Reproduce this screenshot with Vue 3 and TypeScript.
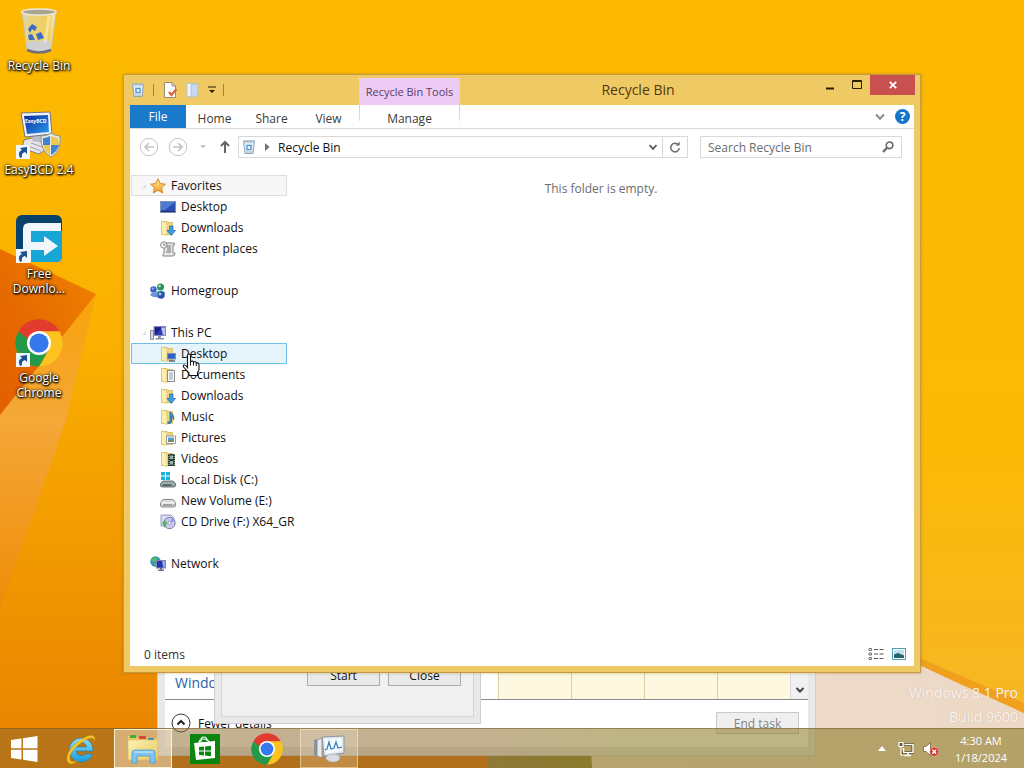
<script setup lang="ts">
import { ref } from 'vue'

interface TreeItem { label: string; icon: string }
interface TreeGroup extends TreeItem { open: boolean; state?: string; children: TreeItem[] }

const shortcuts = [
  { label: 'Recycle Bin', icon: 'bin', link: false },
  { label: 'EasyBCD 2.4', icon: 'easybcd', link: true },
  { label: 'Free Downlo...', icon: 'fdm', link: true },
  { label: 'Google Chrome', icon: 'chrome', link: true },
]

const groups: TreeGroup[] = [
  {
    label: 'Favorites', icon: 'star', open: true, state: 'selected',
    children: [
      { label: 'Desktop', icon: 'screen' },
      { label: 'Downloads', icon: 'f-down' },
      { label: 'Recent places', icon: 'recent' },
    ],
  },
  { label: 'Homegroup', icon: 'home', open: false, children: [] },
  {
    label: 'This PC', icon: 'pc', open: true,
    children: [
      { label: 'Desktop', icon: 'f-desk' },
      { label: 'Documents', icon: 'f-doc' },
      { label: 'Downloads', icon: 'f-down' },
      { label: 'Music', icon: 'f-music' },
      { label: 'Pictures', icon: 'f-pic' },
      { label: 'Videos', icon: 'f-video' },
      { label: 'Local Disk (C:)', icon: 'disk-c' },
      { label: 'New Volume (E:)', icon: 'disk' },
      { label: 'CD Drive (F:) X64_GR', icon: 'cd' },
    ],
  },
  { label: 'Network', icon: 'net', open: false, children: [] },
]

const pinned = [
  { label: 'Internet Explorer', icon: 'ie', state: '' },
  { label: 'File Explorer', icon: 'explorer', state: 'active' },
  { label: 'Store', icon: 'store', state: '' },
  { label: 'Google Chrome', icon: 'chrome', state: '' },
  { label: 'Task Manager', icon: 'taskmgr', state: 'running' },
]

const tabs = ['Home', 'Share', 'View']
const query = ref('')
</script>

<template>
  <svg class="sprite" aria-hidden="true">
    <defs>
      <linearGradient id="g-folder" x1="0" x2="1" y1="0" y2="1"><stop offset="0" stop-color="#fdf3b4" /><stop offset="1" stop-color="#e8c85e" /></linearGradient>
      <linearGradient id="g-glass" x1="0" x2="1"><stop offset="0" stop-color="#d9d6c2" /><stop offset=".25" stop-color="#e9d27c" /><stop offset=".8" stop-color="#f0cf5a" /><stop offset="1" stop-color="#f3efe0" /></linearGradient>
      <linearGradient id="g-scr" x1="0" x2="1" y1="0" y2="1"><stop offset="0" stop-color="#0a2a9c" /><stop offset="1" stop-color="#2e9bee" /></linearGradient>
      <linearGradient id="g-ie" x1="0" x2="0" y1="0" y2="1"><stop offset="0" stop-color="#8ce0fb" /><stop offset="1" stop-color="#1a9be0" /></linearGradient>
      <linearGradient id="g-star" x1="0" x2="0" y1="0" y2="1"><stop offset="0" stop-color="#fff1a0" /><stop offset="1" stop-color="#f59a1c" /></linearGradient>
    </defs>
    <symbol id="bin" viewBox="0 0 48 48">
      <path d="M7 5 L41 5 L36 43 Q24 48 12 43 Z" fill="url(#g-glass)" stroke="#c9c3ac" stroke-width="1" />
      <path d="M12 37 Q17 31 23 35 Q30 30 36 36 L35 43 Q24 48 12 43Z" fill="#cfd0d2" />
      <path d="M12 43 Q24 48 36 43" fill="none" stroke="#6f6f78" stroke-width="2.500" />
      <ellipse cx="24" cy="5" rx="17" ry="3" fill="#a9a48f" stroke="#ece8dc" stroke-width="1.500" />
      <path d="M13 22 L17 17 L22 20 L20 24 L17 22 L15 26Z M21 27 L26 25 L29 31 L23 33Z M13 28 L17 27 L20 33 L14 33Z" fill="#3c6cc8" />
      <path d="M34 9 L30 36" stroke="#fff7d6" stroke-width="3" opacity=".5" />
    </symbol>
    <symbol id="easybcd" viewBox="0 0 48 48">
      <path d="M9 29 L24 25 L38 34 L24 43 L7 37Z" fill="#e6e6ea" stroke="#7d808c" />
      <path d="M16 32 L30 37 M13 35 L26 40" stroke="#9a9ca8" />
      <path d="M18 24 L30 25 L28 32 L17 30Z" fill="#b9bcc6" />
      <path d="M6 2 L35 1 L37 23 L10 26Z" fill="#f2f3f8" stroke="#707484" />
      <path d="M9 5 L33 4 L34 21 L12 23Z" fill="url(#g-scr)" />
      <path d="M36 22 Q40 25 45 25 Q47 40 36 46 Q25 40 26 25 Q32 25 36 22Z" fill="#e9e9e3" stroke="#8f9299" />
      <path d="M35 25 V34 H28 Q28 30 28 27 Q32 27 35 25Z M36 34 H44 Q42 41 36 44Z" fill="#3f83cf" />
      <path d="M36 25 V34 H44 Q44 30 43 27 Q39 27 36 25Z M35 34 H28 Q30 41 35 44Z" fill="#f1c94a" />
    </symbol>
    <symbol id="fdm" viewBox="0 0 48 48">
      <rect x="1" y="0" width="46" height="47" rx="6" fill="#08426a" />
      <path d="M15 16 H47 V41 Q47 47 41 47 H15Z" fill="#18a6d6" />
      <path d="M8 47 V14 Q8 8 14 8 H46 V16 H16 V27 H29 V21 L43 31 L29 41 V35 H16 V47Z" fill="#f1f5fc" />
    </symbol>
    <symbol id="chrome" viewBox="0 0 48 48">
      <path d="M24 24 L3.600 12.200 A23.500 23.500 0 0 1 44.400 12.200Z" fill="#e33b2e" />
      <path d="M24 12.200 H44.400 A23.500 23.500 0 0 1 24 47.500 L34 30Z" fill="#fcc31e" />
      <path d="M3.600 12.200 L14 30 L24 36 L34 30 L24 47.500 A23.500 23.500 0 0 1 3.600 12.200Z" fill="#229a49" />
      <path d="M3.600 12.200 H24 L14 24Z" fill="#e33b2e" />
      <path d="M3.600 12.200 L14 30 L13 20Z" fill="#229a49" />
      <circle cx="24" cy="24" r="12" fill="#fff" /><circle cx="24" cy="24" r="9.600" fill="#3578ec" />
    </symbol>
    <symbol id="arrow" viewBox="0 0 14 14">
      <rect width="14" height="14" fill="#f3f6fa" />
      <path d="M4 13 Q1 7 6 5 L4 3 L11 2 L11 9 L9 7 Q5 8 6 12Z" fill="#1d4f93" />
    </symbol>
    <symbol id="ie" viewBox="0 0 32 32">
      <path d="M16 5 A12 12 0 1 0 27.500 21 H20.500 A5.500 5.500 0 0 1 11 18 H28 A12 12 0 0 0 16 5Z M11 14 A5.300 5.300 0 0 1 21.500 14Z" fill="url(#g-ie)" stroke="#1580bb" stroke-width=".6" fill-rule="evenodd" />
      <path d="M3 29 C-1 23 7 11 19 5 C26 1 31 2 29.500 8 C29 4 25 4 19 8 C9 14 2 23 5.500 28 C7 29.500 10 29 13 27 C9 31 5 32 3 29Z" fill="#f8c926" stroke="#c99510" stroke-width=".4" />
    </symbol>
    <symbol id="explorer" viewBox="0 0 32 32">
      <path d="M1 3 H8 L10 5 H30 V27 H1Z" fill="#eacb66" />
      <path d="M3 2 h6v3h-6z" fill="#3fae3c" /><path d="M12 3 h7v3h-7z" fill="#d74836" /><path d="M21 5 h6v2h-6z" fill="#3b87d0" />
      <path d="M1 7 H31 V27 H1Z" fill="url(#g-folder)" stroke="#d9b654" stroke-width=".6" />
      <path d="M5 30 V20 Q5 17 8 17 H25 Q28 17 28 20 V30 H23 V23 H10 V30Z" fill="#7fc4ee" stroke="#4b9cd0" stroke-width=".8" />
      <path d="M7 19 H26" stroke="#d5effc" />
    </symbol>
    <symbol id="store" viewBox="0 0 32 32">
      <rect x="1" y="1" width="30" height="30" fill="#0b8410" />
      <path d="M12 10 V7 Q12 4 15 4 Q18 4 18 8 M10 10 Q10 6 14 6 Q20 6 20 10" fill="none" stroke="#fff" stroke-width="1.200" />
      <path d="M5 10 L26 8 V25 L7 27Z" fill="#fff" />
      <path d="M10 14 L15 13.500 V17.500 H10Z M16 13.400 L22 12.800 V17.500 H16Z M10 18.500 H15 V22.500 L10 22Z M16 18.500 H22 V23.200 L16 22.600Z" fill="#0b8410" />
    </symbol>
    <symbol id="taskmgr" viewBox="0 0 32 32">
      <path d="M1 7 L4 6 V24 L1 22Z" fill="#8d939c" />
      <path d="M4 7 L9 5 V25 L4 23Z" fill="#e6e9ed" stroke="#777d88" stroke-width=".7" />
      <path d="M9 4 L31 3 V20 L11 23Z" fill="#dfe6ee" stroke="#8c96a3" />
      <path d="M11 6 L29 5 V18 L13 21Z" fill="#f4fafe" />
      <path d="M12 17 L14 16 L16 9 L18 16 L21 15 L23 9 L25 15 L29 14" fill="none" stroke="#2f7fb8" stroke-width="1.200" />
      <ellipse cx="20" cy="25" rx="7" ry="4" fill="#d9dde2" stroke="#a5abb3" stroke-width=".6" />
    </symbol>
    <symbol id="star" viewBox="0 0 16 16"><path d="M8 .8 L10.200 5.600 L15.400 6.200 L11.500 9.700 L12.600 14.900 L8 12.300 L3.400 14.900 L4.500 9.700 L.6 6.200 L5.800 5.600Z" fill="url(#g-star)" stroke="#d9822b" /></symbol>
    <symbol id="screen" viewBox="0 0 16 16"><rect x=".5" y="2.500" width="15" height="11" fill="#2b4fae" stroke="#7f90b8" /><path d="M1 3 H15 L5 11 H1Z" fill="#4f79d6" /><path d="M1 12.500 H15" stroke="#1b2f66" /></symbol>
    <symbol id="folder" viewBox="0 0 16 16">
      <path d="M1.500 1.500 H7 L8 2.500 H12.500 V14.500 H1.500Z" fill="#efd57e" stroke="#d4b55a" stroke-width=".8" />
      <path d="M1.500 1 L7 2.500 V15.500 L1.500 14Z" fill="#fcefad" stroke="#d9be69" stroke-width=".7" />
    </symbol>
    <symbol id="f-down" viewBox="0 0 16 16"><use href="#folder" /><path d="M9.500 6 H13 V10.500 H15.500 L11.200 15.500 L7 10.500 H9.500Z" fill="#3f9fe6" stroke="#1c66a8" stroke-width=".7" /></symbol>
    <symbol id="f-desk" viewBox="0 0 16 16"><use href="#folder" /><rect x="7.500" y="7.500" width="8" height="5.500" fill="#2f5fc0" stroke="#8393ad" /><path d="M9 15 H15" stroke="#5b677d" stroke-width="1.500" /></symbol>
    <symbol id="f-doc" viewBox="0 0 16 16"><use href="#folder" /><rect x="7.500" y="3.500" width="7" height="11" fill="#fbfbfb" stroke="#8d8d8d" /><path d="M9 6h4M9 8h4M9 10h4M9 12h4" stroke="#6d87a8" stroke-width=".8" /></symbol>
    <symbol id="f-music" viewBox="0 0 16 16"><use href="#folder" /><path d="M10 13 V3 Q15 6 13.500 11 Q13.500 8 11.500 7 V13 Q10 15.500 7.500 14 Q8 12 10 13Z" fill="#3d95cf" stroke="#1f6798" stroke-width=".8" /></symbol>
    <symbol id="f-pic" viewBox="0 0 16 16"><use href="#folder" /><rect x="6.500" y="6" width="9" height="7.500" fill="#fdfdfd" stroke="#7d8794" stroke-width=".8" /><path d="M8 7.500h6v2.500h-6z" fill="#5a9ad4" /><path d="M8 10h6v2h-6z" fill="#7d8a6a" /></symbol>
    <symbol id="f-video" viewBox="0 0 16 16"><use href="#folder" /><rect x="8" y="3" width="7" height="12" fill="#2f3a35" /><path d="M10 4.500h3v3.500h-3zM10 10h3v3.500h-3z" fill="#8fb7a5" /><path d="M9 3V15M14.200 3V15" stroke="#eee" stroke-width=".7" stroke-dasharray="1 1" /></symbol>
    <symbol id="recent" viewBox="0 0 16 16"><path d="M4.500 2 H14 Q15 2 14.500 4 H13 V12 H15 Q15 15 13 15 H3 Q2 14 4 12Z" fill="#e7e8e9" stroke="#7f8284" /><path d="M7 5h4M7 7h4M7 9h4M6 11h5" stroke="#666" stroke-width=".9" /><circle cx="3.800" cy="4" r="3.200" fill="#f4f6f7" stroke="#84888c" /><path d="M3.800 2V4.200H5.500" fill="none" stroke="#555" stroke-width=".7" /></symbol>
    <symbol id="home" viewBox="0 0 16 16"><circle cx="10.500" cy="4" r="3.500" fill="#2f8f5b" /><circle cx="3.500" cy="6.500" r="3.200" fill="#3c62c4" /><path d="M0 12 Q2 8 6 10 L8 14 Q3 15 0 12Z" fill="#6d93e4" /><path d="M5 9.500 Q10 6 15.500 9.500 L13 12 H6Z" fill="#59b78a" /><circle cx="11" cy="12" r="3.800" fill="#2b54ad" /><circle cx="10" cy="11" r="1.500" fill="#a6c5f7" /><circle cx="9.600" cy="3" r="1.300" fill="#b5e5c6" /><circle cx="2.800" cy="5.500" r="1" fill="#a6c5f7" /></symbol>
    <symbol id="pc" viewBox="0 0 16 16"><path d="M.5 5.500h3v9h-3z" fill="#d6d9df" stroke="#6d7482" stroke-width=".8" /><rect x="4" y="1.500" width="11.500" height="9" fill="#3038c0" stroke="#8a90a8" /><path d="M5 2.500h7L6 9H5z" fill="#1a1f86" /><path d="M11 2.500h4V10H13z" fill="#b7c4f0" /><path d="M8 11h3v2h3v1.500H5.500V13H8z" fill="#8d93a5" /></symbol>
    <symbol id="disk" viewBox="0 0 16 16"><path d="M3 6.500 H13 L15.500 9.500 V13 Q15 14 14 14 H2 Q1 14 .5 13 V9.500Z" fill="#dcdcdc" stroke="#6e6e6e" stroke-width=".8" /><path d="M.8 9.800 H15.200" stroke="#fff" /><path d="M3 12h9" stroke="#898989" stroke-width="1.400" /><circle cx="13.500" cy="12" r=".8" fill="#4ab84a" /></symbol>
    <symbol id="disk-c" viewBox="0 0 16 16"><path d="M3 9 H13 L15.500 11.500 V14 Q15 15 14 15 H2 Q1 15 .5 14 V11.500Z" fill="#9aa9ab" stroke="#4e5c60" stroke-width=".8" /><path d="M2.500 13.200h9" stroke="#44534f" stroke-width="1.400" /><circle cx="13.400" cy="13" r=".8" fill="#51d651" /><path d="M1 0h4v3.500H1zM6 0h4v3.500H6zM1 4.500h4V8H1zM6 4.500h4V8H6z" fill="#1cb2dd" /></symbol>
    <symbol id="cd" viewBox="0 0 16 16"><path d="M1 1 H11 L14 4 V12 H1Z" fill="#dcdcf4" stroke="#8585b5" stroke-width=".8" /><circle cx="9.500" cy="9" r="5.700" fill="#c9c9ee" stroke="#66669e" stroke-width=".8" /><circle cx="9.500" cy="9" r="1.600" fill="#fff" stroke="#7777aa" stroke-width=".7" /><path d="M2 9 L5 6 L7 9 L5 14Z" fill="#56b16a" /><path d="M11 4 L14 7 L11 8Z" fill="#7892e6" /></symbol>
    <symbol id="net" viewBox="0 0 16 16"><circle cx="5.500" cy="5.500" r="5.200" fill="#2f93c8" /><path d="M2 3 Q5 0 8 2 L6 5 L3 6 L1 5Z M4 7 L7 8 L5 10Z" fill="#58bb61" /><rect x="6.500" y="4.500" width="9" height="7.500" fill="#2233b8" stroke="#8189a4" /><path d="M12 5h3v6.500h-2z" fill="#8fa5ec" /><path d="M10 12h2v1.500h2V15H8v-1.500h2z" fill="#6d7387" /></symbol>
    <symbol id="smallbin" viewBox="0 0 16 16"><path d="M2.500 2 H13.500 L12 14.500 H4Z" fill="#e3eff7" stroke="#8ca5b8" /><path d="M2 2.500 H14" stroke="#a9bdca" stroke-width="2" /><path d="M6 6.500 H10 V10.500 H6Z" fill="#fff" stroke="#5a9ad2" stroke-width="1.400" /><path d="M4.500 13 H11.500" stroke="#a7b8c4" /></symbol>
    <symbol id="props" viewBox="0 0 16 16"><path d="M2.500 .5 H10 L13.500 4 V15.500 H2.500Z" fill="#fff" stroke="#9b8a74" /><path d="M10 .5V4H13.500" fill="none" stroke="#9b8a74" /><path d="M7 10 L9.500 13 L14.500 7" fill="none" stroke="#d5673a" stroke-width="2.200" /></symbol>
    <symbol id="newfolder" viewBox="0 0 16 16"><path d="M2 1.500 H8 V14.500 H2Z" fill="#eef5fd" stroke="#b7c7dd" /><path d="M6 2.500 L13 1.500 V13.500 L6 15.500Z" fill="#c6d9f0" stroke="#a4b8d2" stroke-width=".7" /></symbol>
  </svg>

  <div class="desktop">
    <svg class="wallpaper" viewBox="0 0 1024 768" preserveAspectRatio="none" aria-hidden="true">
      <defs>
        <linearGradient id="w-bg" x1="0" x2="0" y1="0" y2="1"><stop offset=".1" stop-color="#fdb900" /><stop offset=".45" stop-color="#fab000" /><stop offset="1" stop-color="#e88100" /></linearGradient>
        <linearGradient id="w-right" x1="0" x2="0" y1="0" y2="1"><stop offset=".1" stop-color="#fdb900" /><stop offset=".6" stop-color="#fcba07" /><stop offset="1" stop-color="#f5b62c" /></linearGradient>
        <linearGradient id="w-fold" x1="1" x2="0" y1="0" y2="1"><stop offset="0" stop-color="#f08300" /><stop offset=".6" stop-color="#e66a00" /><stop offset="1" stop-color="#e35f00" /></linearGradient>
        <linearGradient id="w-ray" x1="0" x2="0" y1="0" y2="1"><stop offset="0" stop-color="#f8a30a" /><stop offset=".4" stop-color="#f5a738" /><stop offset="1" stop-color="#ee8c08" /></linearGradient>
        <linearGradient id="w-peach" x1="0" x2="1"><stop offset="0" stop-color="#efdcd0" /><stop offset="1" stop-color="#ecd8c4" /></linearGradient>
      </defs>
      <rect width="1024" height="768" fill="url(#w-bg)" />
      <path d="M500 0 H1024 V768 H500Z" fill="url(#w-right)" />
      <path d="M96 294 L66 420 L0 610 V400Z" fill="url(#w-ray)" />
      <path d="M0 249 L96 294 L0 415Z" fill="url(#w-fold)" />
      <path d="M160 700 H500 V768 H160Z" fill="#dc7808" />
      <path d="M488 740 H590 L592 768 H488Z" fill="#938746" />
      <path d="M590 600 L800 600 L922 663 L1024 713 V768 H592Z" fill="url(#w-peach)" />
      <path d="M900 648 L922 659 L1024 703 V713 L960 684 L900 656Z" fill="#f0a01c" />
    </svg>

    <nav class="shortcuts" aria-label="Desktop">
      <a v-for="s in shortcuts" :key="s.label" href="#" class="shortcut">
        <span class="pic">
          <svg class="i48" aria-hidden="true">
            <use :href="'#' + s.icon" />
            <text v-if="s.icon === 'easybcd'" x="10" y="12" class="brand">EasyBCD</text>
          </svg>
          <svg v-if="s.link" class="badge" aria-hidden="true"><use href="#arrow" /></svg>
        </span>
        <span class="caption">{{ s.label }}</span>
      </a>
    </nav>

    <section class="tm" aria-label="Task Manager">
      <div class="tm-list">
        <span class="tm-group">Windows</span>
        <div class="tm-cells"><i v-for="n in 4" :key="n"></i></div>
        <button class="tm-scroll" aria-label="Scroll down"><svg width="10" height="10" viewBox="0 0 10 10"><path d="M1.500 3 L5 6.500 L8.500 3" fill="none" stroke="#404040" stroke-width="2" /></svg></button>
      </div>
      <div class="tm-foot">
        <button class="fewer">
          <svg width="20" height="20" viewBox="0 0 20 20"><circle cx="10" cy="10" r="9" fill="#fff" stroke="#333" /><path d="M6.500 11.500 L10 8 L13.500 11.500" fill="none" stroke="#222" stroke-width="2" /></svg>
          Fewer details
        </button>
        <button class="endtask" disabled>End task</button>
      </div>
    </section>

    <section class="dialog" aria-label="Run">
      <div class="dialog-in"><button>Start</button><button>Close</button></div>
    </section>

    <section class="win" aria-label="Recycle Bin">
      <header class="head">
        <div class="quick">
          <svg class="i16" aria-hidden="true"><use href="#smallbin" /></svg>
          <span class="bar"></span>
          <button aria-label="Properties"><svg class="i16"><use href="#props" /></svg></button>
          <button aria-label="New folder"><svg class="i16"><use href="#newfolder" /></svg></button>
          <button aria-label="Customize toolbar"><svg width="8" height="8" viewBox="0 0 8 8"><path d="M0 .5H8V1.500H0ZM1 4H7L4 7Z" fill="#2b1d00" /></svg></button>
          <span class="bar"></span>
        </div>
        <div class="context">Recycle Bin Tools</div>
        <div class="caption-row">
          <h1>Recycle Bin</h1>
          <button aria-label="Minimize"><svg width="10" height="12" viewBox="0 0 10 12"><path d="M1 9.500H9" stroke="#2b1d00" stroke-width="2" /></svg></button>
          <button aria-label="Maximize"><svg width="10" height="12" viewBox="0 0 10 12"><path d="M.5 1.500H9.500V9.500H.5Z M0 2.500H10" fill="none" stroke="#2b1d00" /></svg></button>
          <button class="close" aria-label="Close"><svg width="8" height="8" viewBox="0 0 8 8"><path d="M.8 .8L7.200 7.200M7.200 .8L.8 7.200" stroke="#fff" stroke-width="1.700" /></svg></button>
        </div>
        <div class="tabs">
          <button class="file">File</button>
          <button v-for="t in tabs" :key="t">{{ t }}</button>
        </div>
        <button class="manage">Manage</button>
        <div class="ribbon-end">
          <button aria-label="Expand ribbon"><svg width="10" height="8" viewBox="0 0 10 8"><path d="M1 1.500L5 5.800L9 1.500" fill="none" stroke="#8d8d8d" stroke-width="2" /></svg></button>
          <button class="help" aria-label="Help">?</button>
        </div>
      </header>

      <div class="address-row">
        <div class="moves">
          <button aria-label="Back"><svg width="20" height="20" viewBox="0 0 20 20"><circle cx="10" cy="10" r="8.700" fill="#fff" stroke="#c3c3c3" /><path d="M15 10H6M10 6L6 10L10 14" fill="none" stroke="#c3c3c3" stroke-width="1.700" /></svg></button>
          <button aria-label="Forward"><svg width="20" height="20" viewBox="0 0 20 20"><circle cx="10" cy="10" r="8.700" fill="#fff" stroke="#c3c3c3" /><path d="M5 10H14M10 6L14 10L10 14" fill="none" stroke="#c3c3c3" stroke-width="1.700" /></svg></button>
          <button aria-label="Recent locations"><svg width="8" height="6" viewBox="0 0 8 6"><path d="M1 1H7L4 4.500Z" fill="#c9c9c9" /></svg></button>
          <button aria-label="Up"><svg width="12" height="14" viewBox="0 0 12 14"><path d="M6 13V2M2 6L6 2L10 6" fill="none" stroke="#666" stroke-width="2" /></svg></button>
        </div>
        <div class="address">
          <svg class="i16" aria-hidden="true"><use href="#smallbin" /></svg>
          <svg class="sep" width="6" height="8" viewBox="0 0 6 8" aria-hidden="true"><path d="M1 0L5.500 4L1 8Z" fill="#707070" /></svg>
          <a href="#">Recycle Bin</a>
          <button aria-label="Previous locations"><svg width="8" height="8" viewBox="0 0 8 8"><path d="M.5 2L4 5.800L7.500 2" fill="none" stroke="#555" stroke-width="1.800" /></svg></button>
          <button class="refresh" aria-label="Refresh"><svg width="12" height="12" viewBox="0 0 12 12"><path d="M9.500 4A4.300 4.300 0 1 0 10.300 7" fill="none" stroke="#707070" stroke-width="1.600" /><path d="M6.500 4.500H10.700V.5Z" fill="#707070" /></svg></button>
        </div>
        <div class="search">
          <input v-model="query" type="text" aria-label="Search Recycle Bin" placeholder="Search Recycle Bin" />
          <svg width="12" height="12" viewBox="0 0 12 12" aria-hidden="true"><circle cx="7.500" cy="4.300" r="3.300" fill="none" stroke="#666" stroke-width="1.600" /><path d="M5 6.800L1 11" stroke="#666" stroke-width="2.200" /></svg>
        </div>
      </div>

      <div class="body">
        <nav class="tree" aria-label="Navigation pane">
          <div v-for="g in groups" :key="g.label" class="group">
            <a href="#" class="row" :class="g.state">
              <svg class="tw" width="8" height="8" viewBox="0 0 8 8" aria-hidden="true"><path v-if="g.open" d="M6 2V6H2Z" fill="#e0e0e0" /></svg>
              <svg class="i16" aria-hidden="true"><use :href="'#' + g.icon" /></svg><span>{{ g.label }}</span>
            </a>
            <a v-for="(c, i) in g.children" :key="i" href="#" class="row child" :class="{ hover: c.icon === 'f-desk' }">
              <svg class="i16" aria-hidden="true"><use :href="'#' + c.icon" /></svg><span>{{ c.label }}</span>
            </a>
          </div>
        </nav>
        <main class="files"><p>This folder is empty.</p></main>
      </div>

      <footer class="status">
        <span>0 items</span>
        <button aria-label="Details view"><svg width="16" height="14" viewBox="0 0 16 14"><path d="M1 1.500h2.500v2H1zM1 6h2.500v2H1zM1 10.500h2.500v2H1z" fill="none" stroke="#666" stroke-width=".9" /><path d="M6 2.500h4M11.500 2.500h4M6 7h4M11.500 7h4M6 11.500h4M11.500 11.500h4" stroke="#555" /></svg></button>
        <button aria-label="Large icons view"><svg width="14" height="12" viewBox="0 0 14 12"><rect x=".5" y=".5" width="13" height="11" fill="#fff" stroke="#4f9fb5" /><path d="M2 2h10v8H2z" fill="#bfe0ee" /><path d="M2 6.500L6 5L12 7.500V10H2z" fill="#24646c" /></svg></button>
      </footer>
    </section>

    <svg class="cursor" width="18" height="24" viewBox="0 0 18 24" aria-hidden="true"><path d="M5.500 2.500Q5.500 1 7 1T8.500 2.500V8.500Q11 7.500 11.500 9Q14 8.200 14.300 10Q17 9.500 17 12V16Q17 18 15.500 19.500V22.500H7V20L2 14.500Q.5 12.500 2 12T5.500 14.500Z" fill="#fff" stroke="#111" stroke-width="1.100" /><path d="M8.500 8.500V12.500M11.500 9V12.500M14.300 10V13" stroke="#111" /></svg>

    <div class="watermark"><span>Windows 8.1 Pro</span><span>Build 9600</span></div>

    <footer class="taskbar">
      <button class="start" aria-label="Start"><svg width="28" height="26" viewBox="0 0 28 26"><path d="M1 4L11.500 2.500V12.300H1ZM13 2.300L27.500 0V12.300H13ZM1 13.700H11.500V23.500L1 22ZM13 13.700H27.500V26L13 23.700Z" fill="#fff" /></svg></button>
      <button v-for="p in pinned" :key="p.label" class="task" :class="p.state" :aria-label="p.label"><svg class="i32"><use :href="'#' + p.icon" /></svg></button>
      <div class="tray">
        <button aria-label="Show hidden icons"><svg width="8" height="5" viewBox="0 0 8 5"><path d="M0 5L4 0L8 5Z" fill="#fff" /></svg></button>
        <button aria-label="Network"><svg width="16" height="16" viewBox="0 0 16 16"><path d="M6.500 3.500H15V11.500H5.500" fill="none" stroke="#4d3c1a" stroke-width="3" /><path d="M6.500 3.500H15V11.500H5.500V7M10 11.500V14.500M6 14.500H13" fill="none" stroke="#fff" stroke-width="1.500" /><path d="M1 1.500H5V5.500H1ZM3 5.500V14H6" fill="#6a552a" stroke="#fff" stroke-width="1.200" /></svg></button>
        <button aria-label="Volume muted"><svg width="16" height="16" viewBox="0 0 16 16"><path d="M.5 5.500H3L7.500 1.500V14.500L3 10.500H.5Z" fill="#fff" stroke="#5c4721" stroke-width=".6" /><circle cx="11.300" cy="10.700" r="4.500" fill="#d2302a" stroke="#f0c8b8" stroke-width=".6" /><path d="M9.400 8.800L13.200 12.600M13.200 8.800L9.400 12.600" stroke="#fff" stroke-width="1.500" /></svg></button>
        <time class="clock"><span>4:30 AM</span><span>1/18/2024</span></time>
      </div>
    </footer>
  </div>
</template>

<style>
html, body { margin: 0; overflow: hidden; }
</style>

<style scoped>
.sprite { position: absolute; width: 0; height: 0; }
.desktop { position: relative; height: 100vh; overflow: hidden; font-family: "Open Sans", "Noto Sans", sans-serif; font-size: 12px; color: #111; background: #f9b000; }
.desktop * { box-sizing: border-box; }
button { border: 0; padding: 0; margin: 0; background: none; font: inherit; color: inherit; display: flex; align-items: center; justify-content: center; }
a { color: inherit; text-decoration: none; }
svg { display: block; flex: none; }
.wallpaper { position: absolute; inset: 0; width: 100%; height: 100%; }
.i16 { width: 16px; height: 16px; }
.i32 { width: 32px; height: 32px; }
.i48 { width: 48px; height: 48px; }

.shortcuts { position: absolute; left: 1px; top: 7px; width: 76px; display: flex; flex-direction: column; }
.shortcut { height: 104px; display: flex; flex-direction: column; align-items: center; gap: 3px; text-align: center; color: #fff; line-height: 15px; text-shadow: 0 1px 2px #000, 1px 1px 2px #000, 0 0 3px #000; }
.pic { position: relative; }
.brand { font-size: 5px; font-weight: 700; fill: #fff; text-shadow: none; }
.badge { position: absolute; left: 1px; bottom: 0; width: 14px; height: 14px; }

.tm { position: absolute; left: 157px; right: 208px; bottom: 12px; height: 110px; padding: 0 7px 8px; border: 1px solid #d0d0d0; background: #e9e9e9; display: flex; flex-direction: column; }
.tm-list { height: 53px; background: #fff; border-bottom: 1px solid #8a8a8a; display: flex; }
.tm-group { flex: 1; padding: 26px 0 0 10px; font-size: 14px; line-height: 20px; color: #2562a8; }
.tm-cells { display: flex; }
.tm-cells i { width: 73px; border-left: 1px solid #d8cfa2; background: #fdf8df; }
.tm-scroll { width: 18px; border-left: 1px solid #ddd; background: #f0f0f0; align-items: flex-end; padding-bottom: 4px; }
.tm-foot { flex: 1; background: #fff; display: flex; justify-content: space-between; align-items: flex-start; padding: 12px 9px 0 6px; }
.fewer { gap: 7px; height: 22px; }
.endtask { width: 83px; height: 22px; border: 1px solid #c9c9c9; background: #efefef; color: #838383; }

.dialog { position: absolute; left: 214px; bottom: 44px; width: 267px; height: 90px; padding: 0 6px 6px; border: 1px solid #cfcfcf; background: #e9e9e9; }
.dialog-in { height: 100%; border: 1px solid #d4d4d4; background: #f0f0f0; display: flex; justify-content: flex-end; align-items: flex-start; gap: 8px; padding: 28px 12px 0 0; }
.dialog-in button { width: 73px; height: 22px; border: 1px solid #acacac; background: #e9e9e9; }

.win { position: absolute; inset: 74px 103px 95px 123px; border: 1px solid #c59a3d; padding: 0 6px 6px; background: #efc964; display: flex; flex-direction: column; box-shadow: 0 0 3px rgba(120, 80, 0, .35); }
.head { display: grid; grid-template-columns: 229px 101px 1fr; grid-template-rows: 30px 24px; background: linear-gradient(#efc964 30px, #fff 30px); }
.quick { display: flex; align-items: center; gap: 7px; }
.quick > .bar + button { margin-left: 1px; }
.quick > .bar { width: 1px; height: 12px; background: #a5803a; }
.context { margin-top: 3px; padding-top: 5px; background: #eccbf5; color: #5a3c66; text-align: center; line-height: 18px; font-size: 11px; }
.caption-row { display: flex; align-items: flex-start; margin-right: -1px; }
.caption-row h1 { flex: 1; margin: 0; text-align: center; font-size: 14px; font-weight: 400; line-height: 30px; color: #4f3a0e; }
.caption-row button { width: 27px; height: 20px; }
.caption-row .close { width: 45px; background: #c8504f; }
.tabs { display: flex; border-bottom: 1px solid #dadbdc; color: #3b3b3b; }
.tabs button { width: 57px; padding-top: 3px; }
.tabs .file { width: 56px; padding: 0; background: #1979ca; color: #fff; }
.manage { border-bottom: 1px solid #dadbdc; color: #3b3b3b; padding-top: 3px; background: linear-gradient(#d5c5db, #e4e4e4) left top / 1px 16px no-repeat, linear-gradient(#d5c5db, #e4e4e4) right top / 1px 16px no-repeat; }
.ribbon-end { display: flex; justify-content: flex-end; align-items: center; gap: 10px; padding-right: 4px; border-bottom: 1px solid #dadbdc; }
.help { width: 15px; height: 15px; border-radius: 50%; background: #1575cc; color: #fff; font-weight: 700; line-height: 15px; }

.address-row { display: flex; padding: 7px 12px 8px 9px; background: #fff; }
.moves { width: 99px; display: flex; align-items: center; gap: 9px; }
.moves button:nth-child(3) { width: 11px; }
.moves button:nth-child(4) { width: 16px; }
.address { flex: 1; height: 22px; border: 1px solid #d9d9d9; display: flex; align-items: center; padding-left: 2px; }
.address a { flex: 1; }
.sep { margin: 0 8px 0 7px; }
.address button { width: 18px; height: 20px; }
.address .refresh { width: 25px; border-left: 1px solid #d9d9d9; }
.search { width: 202px; height: 22px; margin-left: 12px; border: 1px solid #d9d9d9; display: flex; align-items: center; padding: 0 7px; }
.search input { flex: 1; min-width: 0; border: 0; padding: 0; font: inherit; outline: none; background: none; }
.search input::placeholder { color: #6d6d6d; opacity: 1; }

.body { flex: 1; min-height: 0; display: flex; background: #fff; padding-top: 9px; }
.tree { width: 158px; padding-left: 1px; padding-right: 1px; }
.group { margin-bottom: 21px; }
.row { height: 21px; display: flex; align-items: center; gap: 5px; border: 1px solid transparent; padding-left: 8px; white-space: nowrap; }
.row .tw { margin-right: -3px; }
.child { padding-left: 28px; }
.row.selected { background: #f7f7f7; border-color: #dedede; }
.row.hover { background: #e5f3fb; border-color: #70c0e7; }
.files { flex: 1; text-align: center; color: #6d6d6d; }
.files p { margin: 5px 0 0; line-height: 18px; }
.status { height: 24px; display: flex; align-items: center; gap: 8px; padding: 0 8px 0 14px; background: #fff; color: #333; }
.status span { flex: 1; }

.cursor { position: absolute; left: 182px; top: 353px; }
.watermark { position: absolute; right: 6px; bottom: 39px; display: flex; flex-direction: column; text-align: right; font-size: 14px; line-height: 24px; color: rgba(255, 255, 255, .9); text-shadow: 0 0 1px rgba(190, 150, 120, .7); }

.taskbar { position: absolute; left: 0; right: 0; bottom: 0; height: 40px; display: flex; gap: 4px; border-top: 1px solid rgba(120, 90, 40, .55); background: linear-gradient(90deg, rgba(140, 105, 45, .52) 45%, rgba(130, 112, 20, .52) 60%); }
.start { width: 48px; }
.task { width: 58px; border: 1px solid transparent; }
.task.active { background: rgba(255, 250, 235, .42); border-color: rgba(255, 250, 230, .85); }
.task.running { background: rgba(255, 250, 225, .2); border-color: rgba(255, 240, 210, .5); }
.tray { margin-left: auto; display: flex; align-items: center; gap: 9px; color: #fff; }
.tray button:first-child { margin-right: 3px; }
.clock { width: 70px; margin-left: -2px; margin-right: 8px; display: flex; flex-direction: column; text-align: center; font-size: 11px; line-height: 17px; }
</style>
